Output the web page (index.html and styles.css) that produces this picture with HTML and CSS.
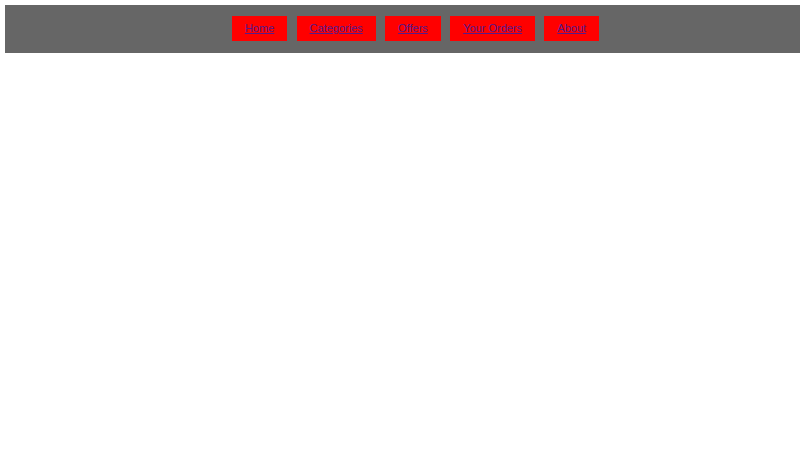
FILE: index.html
```html
<!DOCTYPE html>
<html>
<head>
<meta charset="utf-8">
<title>Shop</title>
<link rel="stylesheet" href="styles.css">
</head>
<body>
<nav class="topbar">
  <ul class="menu">
    <li class="menu-item"><a href="#">Home</a></li>
    <li class="menu-item"><a href="#">Categories</a></li>
    <li class="menu-item"><a href="#">Offers</a></li>
    <li class="menu-item"><a href="#">Your Orders</a></li>
    <li class="menu-item"><a href="#">About</a></li>
  </ul>
</nav>
</body>
</html>
```
FILE: styles.css
```css
html, body {
  background: #ffffff;
}
body {
  margin: 5px 0 0 5px;
  font-family: "Liberation Sans", Arial, sans-serif;
}
.topbar {
  background: #666666;
  height: 48px;
  display: flex;
  align-items: flex-start;
  padding-left: 26px;
}
.menu {
  list-style: none;
  margin: 0;
  padding: 11px 0 0 0;
  flex: 1;
  display: flex;
  justify-content: center;
  gap: 9.3px;
}
.menu-item {
  background: #ff0000;
  padding: 6px 13px;
  font-size: 11px;
  line-height: 13px;
}
.menu-item a {
  color: #551a8b;
}
```
